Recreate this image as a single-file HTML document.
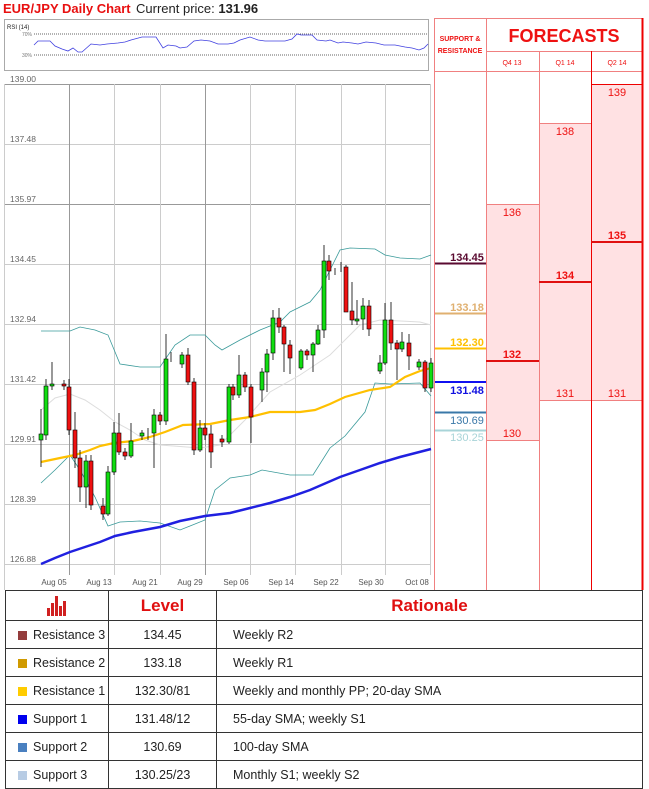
<!DOCTYPE html>
<html><head><meta charset="utf-8"><style>
body{margin:0;width:649px;height:789px;background:#fff;overflow:hidden;font-family:"Liberation Sans",sans-serif;position:relative}
svg{position:absolute;left:0;top:0}
table{position:absolute;left:5px;top:590px;width:638px;border-collapse:collapse;table-layout:fixed;font-size:12.5px;color:#222}
td{border:1px solid #333;padding:0;white-space:nowrap;overflow:hidden;line-height:14px}
tr{height:28px}
.sq{display:inline-block;width:9px;height:9px;margin:0 6px 0 12px;vertical-align:-1px}
</style></head><body>
<svg width="649" height="590" viewBox="0 0 649 590" font-family="Liberation Sans, sans-serif">
<text x="3" y="13" font-size="13" font-weight="bold" fill="#e81010">EUR/JPY Daily Chart</text>
<text x="136" y="13" font-size="13" fill="#222">Current price: <tspan font-weight="bold">131.96</tspan></text>
<rect x="4.5" y="19.5" width="424" height="51" fill="#fff" stroke="#aaa"/>
<text x="7" y="29" font-size="6" fill="#222">RSI (14)</text>
<text x="22" y="36" font-size="5" fill="#777">70%</text><text x="22" y="57" font-size="5" fill="#777">30%</text>
<line x1="34" y1="34" x2="428" y2="34" stroke="#666" stroke-dasharray="1,1"/>
<line x1="34" y1="55" x2="428" y2="55" stroke="#666" stroke-dasharray="1,1"/>
<polyline fill="none" stroke="#4040e0" stroke-width="0.8" points="34,45 38,41 50,41 55,46 62,49 68,51 73,48 78,52 82,52 91,44 100,45 107,44 118,43 125,42 131,40 142,37 156,37 163,48 168,45 176,46 180,48 187,47 194,41 201,40 210,41 218,44 228,44 234,43 240,40 250,37 258,40 265,41 285,41 292,39 297,34 301,35 312,35 317,40 326,41 330,40 338,43 343,42 352,43 358,44 366,42 376,43 384,45 395,45 405,47 412,48 419,50 424,48 428,44"/>
<g stroke="#ccc" stroke-width="1">
<line x1="4" y1="84.5" x2="430" y2="84.5" stroke="#999"/>
<line x1="4" y1="144.5" x2="430" y2="144.5"/><line x1="4" y1="204.5" x2="430" y2="204.5" stroke="#999"/>
<line x1="4" y1="264.5" x2="430" y2="264.5"/><line x1="4" y1="324.5" x2="430" y2="324.5"/>
<line x1="4" y1="384.5" x2="430" y2="384.5"/><line x1="4" y1="444.5" x2="430" y2="444.5"/>
<line x1="4" y1="504.5" x2="430" y2="504.5"/><line x1="4" y1="564.5" x2="430" y2="564.5"/>
<line x1="4.5" y1="84" x2="4.5" y2="590"/>
<line x1="69.5" y1="84" x2="69.5" y2="575" stroke="#999"/><line x1="114.5" y1="84" x2="114.5" y2="575"/>
<line x1="160.5" y1="84" x2="160.5" y2="575"/><line x1="205.5" y1="84" x2="205.5" y2="575" stroke="#999"/>
<line x1="250.5" y1="84" x2="250.5" y2="575"/><line x1="295.5" y1="84" x2="295.5" y2="575"/>
<line x1="341.5" y1="84" x2="341.5" y2="575"/><line x1="385.5" y1="84" x2="385.5" y2="575"/>
<line x1="430.5" y1="84" x2="430.5" y2="575"/>
</g>
<g font-size="8.5" fill="#666">
<text x="10" y="82">139.00</text><text x="10" y="142">137.48</text><text x="10" y="202">135.97</text>
<text x="10" y="262">134.45</text><text x="10" y="322">132.94</text><text x="10" y="382">131.42</text>
<text x="10" y="442">129.91</text><text x="10" y="502">128.39</text><text x="10" y="562">126.88</text>
</g>
<g font-size="8" fill="#555" text-anchor="middle">
<text x="54" y="585">Aug 05</text><text x="99" y="585">Aug 13</text><text x="145" y="585">Aug 21</text>
<text x="190" y="585">Aug 29</text><text x="236" y="585">Sep 06</text><text x="281" y="585">Sep 14</text>
<text x="326" y="585">Sep 22</text><text x="371" y="585">Sep 30</text><text x="417" y="585">Oct 08</text>
</g>
<polyline fill="none" stroke="#ddd" stroke-width="1" points="41,410 55,398 70,394 85,400 100,410 115,422 130,430 145,440 160,445 200,448 220,445 245,420 270,392 300,375 330,355 360,325 380,320 420,322 431,325"/>
<polyline fill="none" stroke="#3a9a9a" stroke-width="0.8" points="41,331 70,331 80,327 95,330 108,335 120,364 140,367 160,367 175,345 190,335 205,335 215,345 222,350 240,340 260,330 280,322 290,312 310,302 320,290 330,270 340,250 350,248 375,249 385,255 400,258 420,259 431,255"/>
<polyline fill="none" stroke="#3a9a9a" stroke-width="0.8" points="41,483 55,470 70,455 80,470 95,497 108,526 120,522 140,521 160,523 180,530 190,526 205,520 215,490 230,478 250,475 262,470 290,475 313,475 330,448 345,436 365,412 375,383 390,384 420,383 431,396"/>
<polyline fill="none" stroke="#ffc000" stroke-width="2.2" points="41,462 60,458 75,455 90,450 100,446 114,443 133,441 150,437 165,432 183,425 210,424 230,420 250,417 270,412 300,412 315,410 330,404 345,397 370,390 390,387 405,377 420,371 431,368"/>
<polyline fill="none" stroke="#2020e0" stroke-width="2.5" points="41,564 55,558 70,552 85,547 100,542 115,536 133,532 160,527 180,521 205,516 230,513 250,508 270,503 290,497 310,490 340,477 360,470 380,463 400,457 431,449"/>
<g stroke="#000" stroke-width="0.8">
<path d="M41 409V467M46 379V440M52 362V390M64 380V390M69 379V435M75 412V468M80 450V502M86 455V508M91 455V510M103 498V520M108 466V516M114 422V475M119 413V455M125 448V460M131 423V458M142 430V440M148 428V440M154 409V468M160 412V425M166 334V425M171 352V362M182 352V368M188 348V385M194 378V455M200 420V452M205 423V440M211 425V468M222 435V447M229 384V444M233 384V400M239 355V398M245 372V392M251 384V443M262 368V402M267 349V392M273 310V360M279 308V333M284 325V372M290 340V374M301 349V370M307 349V360M313 342V372M318 325V345M324 245V338M329 255V280M335 268V275M341 262V272M346 265V312M352 282V325M357 300V325M363 298V330M369 300V336M380 355V374M385 303V365M391 302V350M397 340V380M402 332V352M409 334V370M419 359V370M425 360V392M431 358V392"/>
</g>
<g stroke="#000" stroke-width="0.6" fill="#11dd11">
<rect x="39" y="434" width="4" height="6"/><rect x="44" y="386" width="4" height="49"/><rect x="50" y="384" width="4" height="2"/>
<rect x="84" y="461" width="4" height="26"/><rect x="106" y="472" width="4" height="42"/><rect x="112" y="433" width="4" height="39"/>
<rect x="129" y="441" width="4" height="15"/><rect x="140" y="433" width="4" height="3"/><rect x="152" y="415" width="4" height="18"/>
<rect x="164" y="359" width="4" height="62"/><rect x="180" y="355" width="4" height="9"/><rect x="198" y="428" width="4" height="22"/>
<rect x="227" y="387" width="4" height="55"/><rect x="237" y="375" width="4" height="20"/><rect x="260" y="372" width="4" height="18"/>
<rect x="265" y="354" width="4" height="18"/><rect x="271" y="318" width="4" height="35"/><rect x="299" y="351" width="4" height="17"/>
<rect x="311" y="344" width="4" height="11"/><rect x="316" y="330" width="4" height="14"/><rect x="322" y="261" width="4" height="69"/>
<rect x="355" y="319" width="4" height="2"/><rect x="361" y="306" width="4" height="13"/><rect x="378" y="363" width="4" height="8"/>
<rect x="383" y="320" width="4" height="43"/><rect x="400" y="342" width="4" height="7"/><rect x="417" y="362" width="4" height="5"/>
<rect x="429" y="363" width="4" height="25"/>
</g>
<g stroke="#000" stroke-width="0.6" fill="#ee1111">
<rect x="62" y="384" width="4" height="2"/><rect x="67" y="387" width="4" height="43"/><rect x="73" y="430" width="4" height="28"/>
<rect x="78" y="458" width="4" height="29"/><rect x="89" y="461" width="4" height="44"/><rect x="101" y="506" width="4" height="8"/>
<rect x="117" y="433" width="4" height="19"/><rect x="123" y="452" width="4" height="4"/><rect x="158" y="415" width="4" height="6"/>
<rect x="186" y="355" width="4" height="27"/><rect x="192" y="382" width="4" height="68"/><rect x="203" y="428" width="4" height="7"/>
<rect x="209" y="434" width="4" height="18"/><rect x="220" y="439" width="4" height="3"/><rect x="231" y="387" width="4" height="8"/>
<rect x="243" y="375" width="4" height="12"/><rect x="249" y="387" width="4" height="30"/><rect x="277" y="318" width="4" height="9"/>
<rect x="282" y="327" width="4" height="17"/><rect x="288" y="345" width="4" height="13"/><rect x="305" y="351" width="4" height="4"/>
<rect x="327" y="261" width="4" height="10"/><rect x="344" y="267" width="4" height="45"/><rect x="350" y="311" width="4" height="9"/>
<rect x="367" y="306" width="4" height="23"/><rect x="389" y="320" width="4" height="23"/><rect x="395" y="343" width="4" height="6"/>
<rect x="407" y="343" width="4" height="13"/><rect x="423" y="362" width="4" height="26"/>
</g>
<rect x="486" y="204" width="53" height="236" fill="#ffe1e3"/>
<rect x="539" y="123" width="52" height="277" fill="#ffe1e3"/>
<rect x="591" y="84" width="52" height="316" fill="#ffe1e3"/>
<g stroke="#f08080" stroke-width="1" fill="none">
<line x1="434.5" y1="18" x2="434.5" y2="590"/>
<line x1="486.5" y1="18" x2="486.5" y2="590"/>
<line x1="539.5" y1="51" x2="539.5" y2="590"/>
<line x1="434" y1="18.5" x2="643" y2="18.5"/>
<line x1="486" y1="51.5" x2="643" y2="51.5"/>
<line x1="434" y1="71.5" x2="643" y2="71.5"/>
<line x1="486" y1="204.5" x2="539" y2="204.5"/><line x1="486" y1="440.5" x2="539" y2="440.5"/>
<line x1="539" y1="123.5" x2="591" y2="123.5"/><line x1="539" y1="400.5" x2="643" y2="400.5"/>
</g>
<g stroke="#ee0000" fill="none">
<line x1="591.5" y1="51" x2="591.5" y2="590"/>
<line x1="591" y1="84.5" x2="643" y2="84.5"/>
<line x1="642.5" y1="18" x2="642.5" y2="590" stroke-width="2"/>
<line x1="486" y1="361" x2="539" y2="361" stroke-width="2" stroke="#e01010"/>
<line x1="539" y1="282" x2="591" y2="282" stroke-width="2" stroke="#e01010"/>
<line x1="591" y1="242" x2="643" y2="242" stroke-width="2" stroke="#e01010"/>
</g>
<text x="460" y="41" font-size="7" font-weight="bold" fill="#ee1111" text-anchor="middle">SUPPORT &amp;</text>
<text x="460" y="53" font-size="7" font-weight="bold" fill="#ee1111" text-anchor="middle">RESISTANCE</text>
<text x="564" y="42" font-size="18" font-weight="bold" fill="#ee1111" text-anchor="middle">FORECASTS</text>
<g font-size="7" fill="#ee1111" text-anchor="middle"><text x="512" y="65">Q4 13</text><text x="565" y="65">Q1 14</text><text x="617" y="65">Q2 14</text></g>
<g font-size="11" fill="#ee1111" text-anchor="middle">
<text x="512" y="216">136</text><text x="512" y="437">130</text>
<text x="565" y="135">138</text><text x="565" y="397">131</text>
<text x="617" y="96">139</text><text x="617" y="397">131</text>
<text x="512" y="358" font-weight="bold">132</text><text x="565" y="279" font-weight="bold">134</text><text x="617" y="239" font-weight="bold">135</text>
</g>
<g stroke-width="2">
<line x1="435" y1="263.5" x2="486" y2="263.5" stroke="#5a0a30"/>
<line x1="435" y1="313.5" x2="486" y2="313.5" stroke="#e0b070"/>
<line x1="435" y1="348.5" x2="486" y2="348.5" stroke="#ffc000"/>
<line x1="435" y1="382" x2="486" y2="382" stroke="#1010f0"/>
<line x1="435" y1="412.5" x2="486" y2="412.5" stroke="#3a78a8"/>
<line x1="435" y1="430.5" x2="486" y2="430.5" stroke="#a8d4d8"/>
</g>
<g font-size="11" font-weight="bold" text-anchor="middle">
<text x="467" y="261" fill="#5a0a30">134.45</text>
<text x="467" y="311" fill="#e0b070">133.18</text>
<text x="467" y="346" fill="#ffc000">132.30</text>
<text x="467" y="394" fill="#1010e0">131.48</text>
<text x="467" y="424" fill="#3a78a8" font-weight="normal">130.69</text>
<text x="467" y="441" fill="#a8d4d8" font-weight="normal">130.25</text>
</g>
</svg>
<table>
<colgroup><col style="width:103px"><col style="width:108px"><col></colgroup>
<tr style="height:30px"><td style="text-align:center"><svg width="22" height="20" style="position:static;vertical-align:middle" viewBox="0 0 22 20"><g fill="#d02020"><rect x="1" y="12" width="3" height="8"/><rect x="5" y="7" width="3" height="13"/><rect x="9" y="0" width="3" height="20"/><rect x="13" y="10" width="3" height="10"/><rect x="17" y="5" width="3" height="15"/></g></svg></td>
<td style="text-align:center;font-size:17px;font-weight:bold;color:#e01010">Level</td>
<td style="text-align:center;font-size:17px;font-weight:bold;color:#e01010">Rationale</td></tr>
<tr><td><span class="sq" style="background:#943c3c"></span>Resistance 3</td><td style="text-align:center">134.45</td><td style="padding-left:16px">Weekly R2</td></tr>
<tr><td><span class="sq" style="background:#d09a00"></span>Resistance 2</td><td style="text-align:center">133.18</td><td style="padding-left:16px">Weekly R1</td></tr>
<tr><td><span class="sq" style="background:#ffcc00"></span>Resistance 1</td><td style="text-align:center">132.30/81</td><td style="padding-left:16px">Weekly and monthly PP; 20-day SMA</td></tr>
<tr><td><span class="sq" style="background:#0000ee"></span>Support 1</td><td style="text-align:center">131.48/12</td><td style="padding-left:16px">55-day SMA; weekly S1</td></tr>
<tr><td><span class="sq" style="background:#4a80c0"></span>Support 2</td><td style="text-align:center">130.69</td><td style="padding-left:16px">100-day SMA</td></tr>
<tr><td><span class="sq" style="background:#b8cce4"></span>Support 3</td><td style="text-align:center">130.25/23</td><td style="padding-left:16px">Monthly S1; weekly S2</td></tr>
</table>
</body></html>
